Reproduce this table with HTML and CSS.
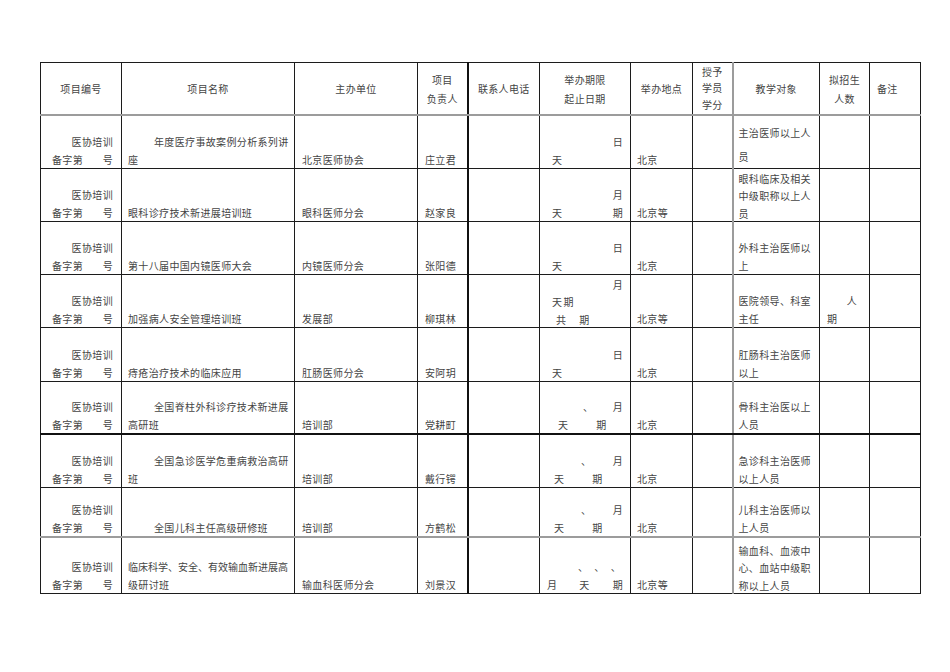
FILE: index.html
```html
<!DOCTYPE html>
<html lang="zh">
<head>
<meta charset="utf-8">
<title>项目申报表</title>
<link rel="stylesheet" href="styles.css">
</head>
<body>
<div class="page">
<table class="sheet">
  <colgroup>
    <col class="c1"><col class="c2"><col class="c3"><col class="c4"><col class="c5"><col class="c6"><col class="c7"><col class="c8"><col class="c9"><col class="c10"><col class="c11">
  </colgroup>
  <thead>
    <tr class="head">
      <th>项目编号</th>
      <th>项目名称</th>
      <th>主办单位</th>
      <th class="thick-r">项目<br>负责人</th>
      <th>联系人电话</th>
      <th>举办期限<br>起止日期</th>
      <th>举办地点</th>
      <th class="grey-r three">授予<br>学员<br>学分</th>
      <th>教学对象</th>
      <th>拟招生<br>人数</th>
      <th class="left">备注</th>
    </tr>
  </thead>
  <tbody>
    <tr class="r53">
      <td class="code"><div class="in"><div class="ln right">医协培训</div><div class="ln split"><span>备字第</span><span>号</span></div></div></td>
      <td class="name"><div class="in"><div class="ln ind">年度医疗事故案例分析系列讲</div><div class="ln">座</div></div></td>
      <td class="org"><div class="in"><div class="ln">北京医师协会</div></div></td>
      <td class="person thick-r"><div class="in"><div class="ln">庄立君</div></div></td>
      <td></td>
      <td class="date"><div class="in"><div class="ln fl"><span class="push">日</span></div><div class="ln fl"><span class="m12">天</span></div></div></td>
      <td class="place"><div class="in"><div class="ln">北京</div></div></td>
      <td class="grey-r"></td>
      <td class="target"><div class="in loose"><div class="ln">主治医师以上人</div><div class="ln">员</div></div></td>
      <td></td>
      <td></td>
    </tr>
    <tr class="r53">
      <td class="code"><div class="in"><div class="ln right">医协培训</div><div class="ln split"><span>备字第</span><span>号</span></div></div></td>
      <td class="name"><div class="in"><div class="ln">眼科诊疗技术新进展培训班</div></div></td>
      <td class="org"><div class="in"><div class="ln">眼科医师分会</div></div></td>
      <td class="person thick-r"><div class="in"><div class="ln">赵家良</div></div></td>
      <td></td>
      <td class="date"><div class="in"><div class="ln fl"><span class="push">月</span></div><div class="ln fl"><span class="m12">天</span><span class="push">期</span></div></div></td>
      <td class="place"><div class="in"><div class="ln">北京等</div></div></td>
      <td class="grey-r"></td>
      <td class="target"><div class="in three"><div class="ln">眼科临床及相关</div><div class="ln">中级职称以上人</div><div class="ln">员</div></div></td>
      <td></td>
      <td></td>
    </tr>
    <tr class="r53">
      <td class="code"><div class="in"><div class="ln right">医协培训</div><div class="ln split"><span>备字第</span><span>号</span></div></div></td>
      <td class="name"><div class="in"><div class="ln">第十八届中国内镜医师大会</div></div></td>
      <td class="org"><div class="in"><div class="ln">内镜医师分会</div></div></td>
      <td class="person thick-r"><div class="in"><div class="ln">张阳德</div></div></td>
      <td></td>
      <td class="date"><div class="in"><div class="ln fl"><span class="push">日</span></div><div class="ln fl"><span class="m12">天</span></div></div></td>
      <td class="place"><div class="in"><div class="ln">北京</div></div></td>
      <td class="grey-r"></td>
      <td class="target"><div class="in"><div class="ln">外科主治医师以</div><div class="ln">上</div></div></td>
      <td></td>
      <td></td>
    </tr>
    <tr class="r53">
      <td class="code"><div class="in"><div class="ln right">医协培训</div><div class="ln split"><span>备字第</span><span>号</span></div></div></td>
      <td class="name"><div class="in"><div class="ln">加强病人安全管理培训班</div></div></td>
      <td class="org"><div class="in"><div class="ln">发展部</div></div></td>
      <td class="person thick-r"><div class="in"><div class="ln">柳琪林</div></div></td>
      <td></td>
      <td class="date"><div class="in three"><div class="ln fl"><span class="push">月</span></div><div class="ln fl"><span class="m12 wide">天期</span></div><div class="ln fl"><span class="m16">共</span><span class="m13">期</span></div></div></td>
      <td class="place"><div class="in"><div class="ln">北京等</div></div></td>
      <td class="grey-r"></td>
      <td class="target"><div class="in"><div class="ln">医院领导、科室</div><div class="ln">主任</div></div></td>
      <td class="count"><div class="in"><div class="ln right">人</div><div class="ln">期</div></div></td>
      <td></td>
    </tr>
    <tr class="r54">
      <td class="code"><div class="in"><div class="ln right">医协培训</div><div class="ln split"><span>备字第</span><span>号</span></div></div></td>
      <td class="name"><div class="in"><div class="ln">痔疮治疗技术的临床应用</div></div></td>
      <td class="org"><div class="in"><div class="ln">肛肠医师分会</div></div></td>
      <td class="person thick-r"><div class="in"><div class="ln">安阿玥</div></div></td>
      <td></td>
      <td class="date"><div class="in"><div class="ln fl"><span class="push">日</span></div><div class="ln fl"><span class="m12">天</span></div></div></td>
      <td class="place"><div class="in"><div class="ln">北京</div></div></td>
      <td class="grey-r"></td>
      <td class="target"><div class="in"><div class="ln">肛肠科主治医师</div><div class="ln">以上</div></div></td>
      <td></td>
      <td></td>
    </tr>
    <tr class="r52 thick-b">
      <td class="code"><div class="in"><div class="ln right">医协培训</div><div class="ln split"><span>备字第</span><span>号</span></div></div></td>
      <td class="name"><div class="in"><div class="ln ind">全国脊柱外科诊疗技术新进展</div><div class="ln">高研班</div></div></td>
      <td class="org"><div class="in"><div class="ln">培训部</div></div></td>
      <td class="person thick-r"><div class="in"><div class="ln">党耕町</div></div></td>
      <td></td>
      <td class="date"><div class="in"><div class="ln fl"><span class="m43">、</span><span class="push">月</span></div><div class="ln fl"><span class="m18">天</span><span class="m28">期</span></div></div></td>
      <td class="place"><div class="in"><div class="ln">北京</div></div></td>
      <td class="grey-r"></td>
      <td class="target"><div class="in"><div class="ln">骨科主治医以上</div><div class="ln">人员</div></div></td>
      <td></td>
      <td></td>
    </tr>
    <tr class="r53">
      <td class="code"><div class="in"><div class="ln right">医协培训</div><div class="ln split"><span>备字第</span><span>号</span></div></div></td>
      <td class="name"><div class="in"><div class="ln ind">全国急诊医学危重病救治高研</div><div class="ln">班</div></div></td>
      <td class="org"><div class="in"><div class="ln">培训部</div></div></td>
      <td class="person thick-r"><div class="in"><div class="ln">戴行锷</div></div></td>
      <td></td>
      <td class="date"><div class="in"><div class="ln fl"><span class="m41">、</span><span class="push">月</span></div><div class="ln fl"><span class="m14">天</span><span class="m28">期</span></div></div></td>
      <td class="place"><div class="in"><div class="ln">北京</div></div></td>
      <td class="grey-r"></td>
      <td class="target"><div class="in"><div class="ln">急诊科主治医师</div><div class="ln">以上人员</div></div></td>
      <td></td>
      <td></td>
    </tr>
    <tr class="r51 grey-b">
      <td class="code"><div class="in"><div class="ln right">医协培训</div><div class="ln split"><span>备字第</span><span>号</span></div></div></td>
      <td class="name"><div class="in"><div class="ln ind">全国儿科主任高级研修班</div></div></td>
      <td class="org"><div class="in"><div class="ln">培训部</div></div></td>
      <td class="person thick-r"><div class="in"><div class="ln">方鹤松</div></div></td>
      <td></td>
      <td class="date"><div class="in"><div class="ln fl"><span class="m41">、</span><span class="push">月</span></div><div class="ln fl"><span class="m14">天</span><span class="m28">期</span></div></div></td>
      <td class="place"><div class="in"><div class="ln">北京</div></div></td>
      <td class="grey-r"></td>
      <td class="target"><div class="in"><div class="ln">儿科主治医师以</div><div class="ln">上人员</div></div></td>
      <td></td>
      <td></td>
    </tr>
    <tr class="r55">
      <td class="code"><div class="in"><div class="ln right">医协培训</div><div class="ln split"><span>备字第</span><span>号</span></div></div></td>
      <td class="name"><div class="in"><div class="ln tight">临床科学、安全、有效输血新进展高</div><div class="ln">级研讨班</div></div></td>
      <td class="org"><div class="in"><div class="ln">输血科医师分会</div></div></td>
      <td class="person thick-r"><div class="in"><div class="ln">刘景汉</div></div></td>
      <td></td>
      <td class="date"><div class="in"><div class="ln fl"><span class="m38">、</span><span class="m6">、</span><span class="m6">、</span></div><div class="ln fl"><span class="m7">月</span><span class="m22">天</span><span class="push">期</span></div></div></td>
      <td class="place"><div class="in"><div class="ln">北京等</div></div></td>
      <td class="grey-r"></td>
      <td class="target"><div class="in three"><div class="ln">输血科、血液中</div><div class="ln">心、血站中级职</div><div class="ln">称以上人员</div></div></td>
      <td></td>
      <td></td>
    </tr>
  </tbody>
</table>
</div>
</body>
</html>
```

FILE: styles.css
```css
html, body {
  margin: 0;
  padding: 0;
  background: #ffffff;
}

body {
  font-family: "Noto Sans CJK SC", "Noto Sans", sans-serif;
  font-size: 10px;
  color: #444444;
}

.page {
  padding: 62px 0 0 40px;
}

.sheet {
  border-collapse: collapse;
  table-layout: fixed;
  width: 881px;
}

.c1 { width: 81px; }
.c2 { width: 173px; }
.c3 { width: 123px; }
.c4 { width: 50px; }
.c5 { width: 72px; }
.c6 { width: 91px; }
.c7 { width: 62px; }
.c8 { width: 40px; }
.c9 { width: 87px; }
.c10 { width: 50px; }
.c11 { width: 51px; }

.sheet th,
.sheet td {
  border: 1px solid #1c1c1c;
  padding: 0;
  letter-spacing: 0.35px;
  white-space: nowrap;
  overflow: visible;
}

.sheet th {
  font-weight: normal;
  text-align: center;
  vertical-align: middle;
  line-height: 19px;
  height: 51px;
  border-bottom: 2px solid #9c9c9c;
}

.sheet th.three {
  line-height: 16.5px;
}

.sheet th.left {
  text-align: left;
  padding-left: 7px;
}

.sheet td {
  vertical-align: bottom;
  line-height: 18px;
}

.r51 td { height: 48px; }
.r52 td { height: 51px; }
.r53 td { height: 52px; }
.r54 td { height: 53px; }
.r55 td { height: 55px; }

.sheet .thick-r { border-right: 2px solid #111111; }
.sheet .grey-r { border-right: 2px solid #9c9c9c; }
.sheet .thick-b td { border-bottom: 2px solid #111111; }
.sheet .grey-b td { border-bottom: 2px solid #9c9c9c; }

.in {
  margin-bottom: -1px;
}

.in.loose {
  line-height: 24px;
}

.in.three {
  line-height: 17.3px;
}

.in.three .ln.fl {
  height: 17.3px;
}

.ln.right { text-align: right; }

.ln.split {
  display: flex;
  justify-content: space-between;
}

.ln.fl {
  display: flex;
  height: 18px;
}

.ln.tight { letter-spacing: 0; }

.code { padding: 0 8px 0 11px !important; }
.name { padding: 0 0 0 6px !important; }
.name .ind { text-indent: 26px; }
.org { padding-left: 7px !important; }
.person { padding-left: 7px !important; }
.date { padding-right: 7px !important; }
.place { padding-left: 6px !important; }
.target { padding-left: 5px !important; }
.count { padding: 0 12px 0 7px !important; }

.push { margin-left: auto; }
.wide { letter-spacing: 1.5px; }

.m6 { margin-left: 6px; }
.m7 { margin-left: 7px; }
.m12 { margin-left: 12px; }
.m13 { margin-left: 13px; }
.m14 { margin-left: 14px; }
.m16 { margin-left: 16px; }
.m18 { margin-left: 18px; }
.m22 { margin-left: 22px; }
.m28 { margin-left: 28px; }
.m38 { margin-left: 38px; }
.m41 { margin-left: 41px; }
.m43 { margin-left: 43px; }
```
